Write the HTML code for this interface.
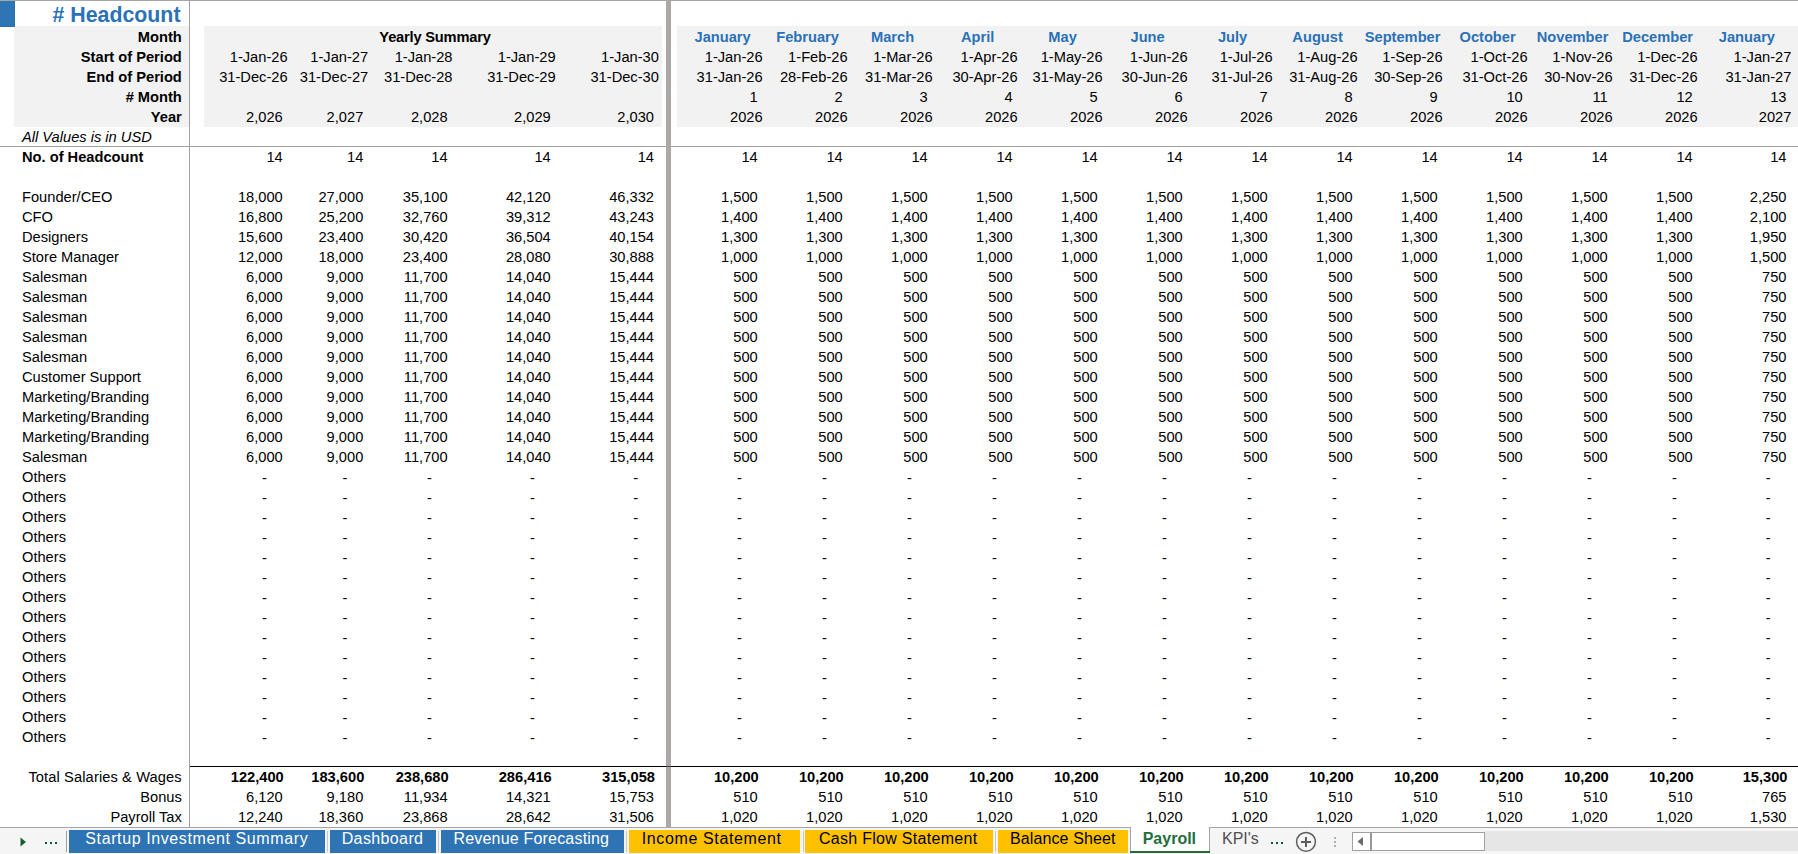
<!DOCTYPE html><html><head><meta charset="utf-8"><style>
*{margin:0;padding:0;box-sizing:border-box}
html,body{width:1798px;height:854px;overflow:hidden;background:#fff}
body{position:relative;font-family:"Liberation Sans", sans-serif;font-size:14.67px;color:#000}
.a{position:absolute}
.t{position:absolute;white-space:pre;line-height:20px;height:20px}
.r{text-align:right}
.b{font-weight:bold}
.bl{color:#2a71b8;font-weight:bold}
.c{text-align:center}
.i{font-style:italic}
</style></head><body>
<div class="a" style="left:14px;top:26px;width:175px;height:101px;background:#f2f2f2;"></div>
<div class="a" style="left:204px;top:26px;width:458px;height:101px;background:#f2f2f2;"></div>
<div class="a" style="left:677px;top:26px;width:1121px;height:101px;background:#f2f2f2;"></div>
<div class="a" style="left:0px;top:1px;width:15px;height:26px;background:#2e75b6;"></div>
<div class="a" style="left:14px;top:1px;width:1px;height:25px;background:#2a6db0;"></div>
<div class="a" style="left:0px;top:26px;width:14px;height:1px;background:#2a6db0;"></div>
<div class="t r bl" style="left:-119.5px;top:2px;width:300px;height:26px;line-height:26px;font-size:21.33px"># Headcount</div>
<div class="t r b" style="left:-118.20px;top:27px;width:300px">Month</div>
<div class="t r b" style="left:-118.20px;top:47px;width:300px">Start of Period</div>
<div class="t r b" style="left:-118.20px;top:67px;width:300px">End of Period</div>
<div class="t r b" style="left:-118.20px;top:87px;width:300px"># Month</div>
<div class="t r b" style="left:-118.20px;top:107px;width:300px">Year</div>
<div class="t i" style="left:22.00px;top:127px">All Values is in USD</div>
<div class="t c b" style="left:285.00px;top:27px;width:300px"><span style="letter-spacing:-0.2px">Yearly Summary</span></div>
<div class="t r " style="left:-12.40px;top:47px;width:300px">1-Jan-26</div>
<div class="t r " style="left:-12.40px;top:67px;width:300px">31-Dec-26</div>
<div class="t r " style="left:-17.29px;top:107px;width:300px">2,026</div>
<div class="t r " style="left:68.20px;top:47px;width:300px">1-Jan-27</div>
<div class="t r " style="left:68.20px;top:67px;width:300px">31-Dec-27</div>
<div class="t r " style="left:63.31px;top:107px;width:300px">2,027</div>
<div class="t r " style="left:152.50px;top:47px;width:300px">1-Jan-28</div>
<div class="t r " style="left:152.50px;top:67px;width:300px">31-Dec-28</div>
<div class="t r " style="left:147.61px;top:107px;width:300px">2,028</div>
<div class="t r " style="left:255.60px;top:47px;width:300px">1-Jan-29</div>
<div class="t r " style="left:255.60px;top:67px;width:300px">31-Dec-29</div>
<div class="t r " style="left:250.71px;top:107px;width:300px">2,029</div>
<div class="t r " style="left:358.90px;top:47px;width:300px">1-Jan-30</div>
<div class="t r " style="left:358.90px;top:67px;width:300px">31-Dec-30</div>
<div class="t r " style="left:354.01px;top:107px;width:300px">2,030</div>
<div class="t c bl" style="left:572.60px;top:27px;width:300px">January</div>
<div class="t r " style="left:462.60px;top:47px;width:300px">1-Jan-26</div>
<div class="t r " style="left:462.60px;top:67px;width:300px">31-Jan-26</div>
<div class="t r " style="left:457.71px;top:87px;width:300px">1</div>
<div class="t r " style="left:462.60px;top:107px;width:300px">2026</div>
<div class="t c bl" style="left:657.60px;top:27px;width:300px">February</div>
<div class="t r " style="left:547.60px;top:47px;width:300px">1-Feb-26</div>
<div class="t r " style="left:547.60px;top:67px;width:300px">28-Feb-26</div>
<div class="t r " style="left:542.71px;top:87px;width:300px">2</div>
<div class="t r " style="left:547.60px;top:107px;width:300px">2026</div>
<div class="t c bl" style="left:742.60px;top:27px;width:300px">March</div>
<div class="t r " style="left:632.60px;top:47px;width:300px">1-Mar-26</div>
<div class="t r " style="left:632.60px;top:67px;width:300px">31-Mar-26</div>
<div class="t r " style="left:627.71px;top:87px;width:300px">3</div>
<div class="t r " style="left:632.60px;top:107px;width:300px">2026</div>
<div class="t c bl" style="left:827.60px;top:27px;width:300px">April</div>
<div class="t r " style="left:717.60px;top:47px;width:300px">1-Apr-26</div>
<div class="t r " style="left:717.60px;top:67px;width:300px">30-Apr-26</div>
<div class="t r " style="left:712.71px;top:87px;width:300px">4</div>
<div class="t r " style="left:717.60px;top:107px;width:300px">2026</div>
<div class="t c bl" style="left:912.60px;top:27px;width:300px">May</div>
<div class="t r " style="left:802.60px;top:47px;width:300px">1-May-26</div>
<div class="t r " style="left:802.60px;top:67px;width:300px">31-May-26</div>
<div class="t r " style="left:797.71px;top:87px;width:300px">5</div>
<div class="t r " style="left:802.60px;top:107px;width:300px">2026</div>
<div class="t c bl" style="left:997.60px;top:27px;width:300px">June</div>
<div class="t r " style="left:887.60px;top:47px;width:300px">1-Jun-26</div>
<div class="t r " style="left:887.60px;top:67px;width:300px">30-Jun-26</div>
<div class="t r " style="left:882.71px;top:87px;width:300px">6</div>
<div class="t r " style="left:887.60px;top:107px;width:300px">2026</div>
<div class="t c bl" style="left:1082.60px;top:27px;width:300px">July</div>
<div class="t r " style="left:972.60px;top:47px;width:300px">1-Jul-26</div>
<div class="t r " style="left:972.60px;top:67px;width:300px">31-Jul-26</div>
<div class="t r " style="left:967.71px;top:87px;width:300px">7</div>
<div class="t r " style="left:972.60px;top:107px;width:300px">2026</div>
<div class="t c bl" style="left:1167.60px;top:27px;width:300px">August</div>
<div class="t r " style="left:1057.60px;top:47px;width:300px">1-Aug-26</div>
<div class="t r " style="left:1057.60px;top:67px;width:300px">31-Aug-26</div>
<div class="t r " style="left:1052.71px;top:87px;width:300px">8</div>
<div class="t r " style="left:1057.60px;top:107px;width:300px">2026</div>
<div class="t c bl" style="left:1252.60px;top:27px;width:300px">September</div>
<div class="t r " style="left:1142.60px;top:47px;width:300px">1-Sep-26</div>
<div class="t r " style="left:1142.60px;top:67px;width:300px">30-Sep-26</div>
<div class="t r " style="left:1137.71px;top:87px;width:300px">9</div>
<div class="t r " style="left:1142.60px;top:107px;width:300px">2026</div>
<div class="t c bl" style="left:1337.60px;top:27px;width:300px">October</div>
<div class="t r " style="left:1227.60px;top:47px;width:300px">1-Oct-26</div>
<div class="t r " style="left:1227.60px;top:67px;width:300px">31-Oct-26</div>
<div class="t r " style="left:1222.71px;top:87px;width:300px">10</div>
<div class="t r " style="left:1227.60px;top:107px;width:300px">2026</div>
<div class="t c bl" style="left:1422.60px;top:27px;width:300px">November</div>
<div class="t r " style="left:1312.60px;top:47px;width:300px">1-Nov-26</div>
<div class="t r " style="left:1312.60px;top:67px;width:300px">30-Nov-26</div>
<div class="t r " style="left:1307.71px;top:87px;width:300px">11</div>
<div class="t r " style="left:1312.60px;top:107px;width:300px">2026</div>
<div class="t c bl" style="left:1507.60px;top:27px;width:300px">December</div>
<div class="t r " style="left:1397.60px;top:47px;width:300px">1-Dec-26</div>
<div class="t r " style="left:1397.60px;top:67px;width:300px">31-Dec-26</div>
<div class="t r " style="left:1392.71px;top:87px;width:300px">12</div>
<div class="t r " style="left:1397.60px;top:107px;width:300px">2026</div>
<div class="t c bl" style="left:1596.90px;top:27px;width:300px">January</div>
<div class="t r " style="left:1491.40px;top:47px;width:300px">1-Jan-27</div>
<div class="t r " style="left:1491.40px;top:67px;width:300px">31-Jan-27</div>
<div class="t r " style="left:1486.51px;top:87px;width:300px">13</div>
<div class="t r " style="left:1491.40px;top:107px;width:300px">2027</div>
<div class="t b" style="left:22.00px;top:147px">No. of Headcount</div>
<div class="t r " style="left:-17.29px;top:147px;width:300px">14</div>
<div class="t r " style="left:63.31px;top:147px;width:300px">14</div>
<div class="t r " style="left:147.61px;top:147px;width:300px">14</div>
<div class="t r " style="left:250.71px;top:147px;width:300px">14</div>
<div class="t r " style="left:354.01px;top:147px;width:300px">14</div>
<div class="t r " style="left:457.71px;top:147px;width:300px">14</div>
<div class="t r " style="left:542.71px;top:147px;width:300px">14</div>
<div class="t r " style="left:627.71px;top:147px;width:300px">14</div>
<div class="t r " style="left:712.71px;top:147px;width:300px">14</div>
<div class="t r " style="left:797.71px;top:147px;width:300px">14</div>
<div class="t r " style="left:882.71px;top:147px;width:300px">14</div>
<div class="t r " style="left:967.71px;top:147px;width:300px">14</div>
<div class="t r " style="left:1052.71px;top:147px;width:300px">14</div>
<div class="t r " style="left:1137.71px;top:147px;width:300px">14</div>
<div class="t r " style="left:1222.71px;top:147px;width:300px">14</div>
<div class="t r " style="left:1307.71px;top:147px;width:300px">14</div>
<div class="t r " style="left:1392.71px;top:147px;width:300px">14</div>
<div class="t r " style="left:1486.51px;top:147px;width:300px">14</div>
<div class="t " style="left:22.00px;top:187px">Founder/CEO</div>
<div class="t r " style="left:-17.29px;top:187px;width:300px">18,000</div>
<div class="t r " style="left:63.31px;top:187px;width:300px">27,000</div>
<div class="t r " style="left:147.61px;top:187px;width:300px">35,100</div>
<div class="t r " style="left:250.71px;top:187px;width:300px">42,120</div>
<div class="t r " style="left:354.01px;top:187px;width:300px">46,332</div>
<div class="t r " style="left:457.71px;top:187px;width:300px">1,500</div>
<div class="t r " style="left:542.71px;top:187px;width:300px">1,500</div>
<div class="t r " style="left:627.71px;top:187px;width:300px">1,500</div>
<div class="t r " style="left:712.71px;top:187px;width:300px">1,500</div>
<div class="t r " style="left:797.71px;top:187px;width:300px">1,500</div>
<div class="t r " style="left:882.71px;top:187px;width:300px">1,500</div>
<div class="t r " style="left:967.71px;top:187px;width:300px">1,500</div>
<div class="t r " style="left:1052.71px;top:187px;width:300px">1,500</div>
<div class="t r " style="left:1137.71px;top:187px;width:300px">1,500</div>
<div class="t r " style="left:1222.71px;top:187px;width:300px">1,500</div>
<div class="t r " style="left:1307.71px;top:187px;width:300px">1,500</div>
<div class="t r " style="left:1392.71px;top:187px;width:300px">1,500</div>
<div class="t r " style="left:1486.51px;top:187px;width:300px">2,250</div>
<div class="t " style="left:22.00px;top:207px">CFO</div>
<div class="t r " style="left:-17.29px;top:207px;width:300px">16,800</div>
<div class="t r " style="left:63.31px;top:207px;width:300px">25,200</div>
<div class="t r " style="left:147.61px;top:207px;width:300px">32,760</div>
<div class="t r " style="left:250.71px;top:207px;width:300px">39,312</div>
<div class="t r " style="left:354.01px;top:207px;width:300px">43,243</div>
<div class="t r " style="left:457.71px;top:207px;width:300px">1,400</div>
<div class="t r " style="left:542.71px;top:207px;width:300px">1,400</div>
<div class="t r " style="left:627.71px;top:207px;width:300px">1,400</div>
<div class="t r " style="left:712.71px;top:207px;width:300px">1,400</div>
<div class="t r " style="left:797.71px;top:207px;width:300px">1,400</div>
<div class="t r " style="left:882.71px;top:207px;width:300px">1,400</div>
<div class="t r " style="left:967.71px;top:207px;width:300px">1,400</div>
<div class="t r " style="left:1052.71px;top:207px;width:300px">1,400</div>
<div class="t r " style="left:1137.71px;top:207px;width:300px">1,400</div>
<div class="t r " style="left:1222.71px;top:207px;width:300px">1,400</div>
<div class="t r " style="left:1307.71px;top:207px;width:300px">1,400</div>
<div class="t r " style="left:1392.71px;top:207px;width:300px">1,400</div>
<div class="t r " style="left:1486.51px;top:207px;width:300px">2,100</div>
<div class="t " style="left:22.00px;top:227px">Designers</div>
<div class="t r " style="left:-17.29px;top:227px;width:300px">15,600</div>
<div class="t r " style="left:63.31px;top:227px;width:300px">23,400</div>
<div class="t r " style="left:147.61px;top:227px;width:300px">30,420</div>
<div class="t r " style="left:250.71px;top:227px;width:300px">36,504</div>
<div class="t r " style="left:354.01px;top:227px;width:300px">40,154</div>
<div class="t r " style="left:457.71px;top:227px;width:300px">1,300</div>
<div class="t r " style="left:542.71px;top:227px;width:300px">1,300</div>
<div class="t r " style="left:627.71px;top:227px;width:300px">1,300</div>
<div class="t r " style="left:712.71px;top:227px;width:300px">1,300</div>
<div class="t r " style="left:797.71px;top:227px;width:300px">1,300</div>
<div class="t r " style="left:882.71px;top:227px;width:300px">1,300</div>
<div class="t r " style="left:967.71px;top:227px;width:300px">1,300</div>
<div class="t r " style="left:1052.71px;top:227px;width:300px">1,300</div>
<div class="t r " style="left:1137.71px;top:227px;width:300px">1,300</div>
<div class="t r " style="left:1222.71px;top:227px;width:300px">1,300</div>
<div class="t r " style="left:1307.71px;top:227px;width:300px">1,300</div>
<div class="t r " style="left:1392.71px;top:227px;width:300px">1,300</div>
<div class="t r " style="left:1486.51px;top:227px;width:300px">1,950</div>
<div class="t " style="left:22.00px;top:247px">Store Manager</div>
<div class="t r " style="left:-17.29px;top:247px;width:300px">12,000</div>
<div class="t r " style="left:63.31px;top:247px;width:300px">18,000</div>
<div class="t r " style="left:147.61px;top:247px;width:300px">23,400</div>
<div class="t r " style="left:250.71px;top:247px;width:300px">28,080</div>
<div class="t r " style="left:354.01px;top:247px;width:300px">30,888</div>
<div class="t r " style="left:457.71px;top:247px;width:300px">1,000</div>
<div class="t r " style="left:542.71px;top:247px;width:300px">1,000</div>
<div class="t r " style="left:627.71px;top:247px;width:300px">1,000</div>
<div class="t r " style="left:712.71px;top:247px;width:300px">1,000</div>
<div class="t r " style="left:797.71px;top:247px;width:300px">1,000</div>
<div class="t r " style="left:882.71px;top:247px;width:300px">1,000</div>
<div class="t r " style="left:967.71px;top:247px;width:300px">1,000</div>
<div class="t r " style="left:1052.71px;top:247px;width:300px">1,000</div>
<div class="t r " style="left:1137.71px;top:247px;width:300px">1,000</div>
<div class="t r " style="left:1222.71px;top:247px;width:300px">1,000</div>
<div class="t r " style="left:1307.71px;top:247px;width:300px">1,000</div>
<div class="t r " style="left:1392.71px;top:247px;width:300px">1,000</div>
<div class="t r " style="left:1486.51px;top:247px;width:300px">1,500</div>
<div class="t " style="left:22.00px;top:267px">Salesman</div>
<div class="t r " style="left:-17.29px;top:267px;width:300px">6,000</div>
<div class="t r " style="left:63.31px;top:267px;width:300px">9,000</div>
<div class="t r " style="left:147.61px;top:267px;width:300px">11,700</div>
<div class="t r " style="left:250.71px;top:267px;width:300px">14,040</div>
<div class="t r " style="left:354.01px;top:267px;width:300px">15,444</div>
<div class="t r " style="left:457.71px;top:267px;width:300px">500</div>
<div class="t r " style="left:542.71px;top:267px;width:300px">500</div>
<div class="t r " style="left:627.71px;top:267px;width:300px">500</div>
<div class="t r " style="left:712.71px;top:267px;width:300px">500</div>
<div class="t r " style="left:797.71px;top:267px;width:300px">500</div>
<div class="t r " style="left:882.71px;top:267px;width:300px">500</div>
<div class="t r " style="left:967.71px;top:267px;width:300px">500</div>
<div class="t r " style="left:1052.71px;top:267px;width:300px">500</div>
<div class="t r " style="left:1137.71px;top:267px;width:300px">500</div>
<div class="t r " style="left:1222.71px;top:267px;width:300px">500</div>
<div class="t r " style="left:1307.71px;top:267px;width:300px">500</div>
<div class="t r " style="left:1392.71px;top:267px;width:300px">500</div>
<div class="t r " style="left:1486.51px;top:267px;width:300px">750</div>
<div class="t " style="left:22.00px;top:287px">Salesman</div>
<div class="t r " style="left:-17.29px;top:287px;width:300px">6,000</div>
<div class="t r " style="left:63.31px;top:287px;width:300px">9,000</div>
<div class="t r " style="left:147.61px;top:287px;width:300px">11,700</div>
<div class="t r " style="left:250.71px;top:287px;width:300px">14,040</div>
<div class="t r " style="left:354.01px;top:287px;width:300px">15,444</div>
<div class="t r " style="left:457.71px;top:287px;width:300px">500</div>
<div class="t r " style="left:542.71px;top:287px;width:300px">500</div>
<div class="t r " style="left:627.71px;top:287px;width:300px">500</div>
<div class="t r " style="left:712.71px;top:287px;width:300px">500</div>
<div class="t r " style="left:797.71px;top:287px;width:300px">500</div>
<div class="t r " style="left:882.71px;top:287px;width:300px">500</div>
<div class="t r " style="left:967.71px;top:287px;width:300px">500</div>
<div class="t r " style="left:1052.71px;top:287px;width:300px">500</div>
<div class="t r " style="left:1137.71px;top:287px;width:300px">500</div>
<div class="t r " style="left:1222.71px;top:287px;width:300px">500</div>
<div class="t r " style="left:1307.71px;top:287px;width:300px">500</div>
<div class="t r " style="left:1392.71px;top:287px;width:300px">500</div>
<div class="t r " style="left:1486.51px;top:287px;width:300px">750</div>
<div class="t " style="left:22.00px;top:307px">Salesman</div>
<div class="t r " style="left:-17.29px;top:307px;width:300px">6,000</div>
<div class="t r " style="left:63.31px;top:307px;width:300px">9,000</div>
<div class="t r " style="left:147.61px;top:307px;width:300px">11,700</div>
<div class="t r " style="left:250.71px;top:307px;width:300px">14,040</div>
<div class="t r " style="left:354.01px;top:307px;width:300px">15,444</div>
<div class="t r " style="left:457.71px;top:307px;width:300px">500</div>
<div class="t r " style="left:542.71px;top:307px;width:300px">500</div>
<div class="t r " style="left:627.71px;top:307px;width:300px">500</div>
<div class="t r " style="left:712.71px;top:307px;width:300px">500</div>
<div class="t r " style="left:797.71px;top:307px;width:300px">500</div>
<div class="t r " style="left:882.71px;top:307px;width:300px">500</div>
<div class="t r " style="left:967.71px;top:307px;width:300px">500</div>
<div class="t r " style="left:1052.71px;top:307px;width:300px">500</div>
<div class="t r " style="left:1137.71px;top:307px;width:300px">500</div>
<div class="t r " style="left:1222.71px;top:307px;width:300px">500</div>
<div class="t r " style="left:1307.71px;top:307px;width:300px">500</div>
<div class="t r " style="left:1392.71px;top:307px;width:300px">500</div>
<div class="t r " style="left:1486.51px;top:307px;width:300px">750</div>
<div class="t " style="left:22.00px;top:327px">Salesman</div>
<div class="t r " style="left:-17.29px;top:327px;width:300px">6,000</div>
<div class="t r " style="left:63.31px;top:327px;width:300px">9,000</div>
<div class="t r " style="left:147.61px;top:327px;width:300px">11,700</div>
<div class="t r " style="left:250.71px;top:327px;width:300px">14,040</div>
<div class="t r " style="left:354.01px;top:327px;width:300px">15,444</div>
<div class="t r " style="left:457.71px;top:327px;width:300px">500</div>
<div class="t r " style="left:542.71px;top:327px;width:300px">500</div>
<div class="t r " style="left:627.71px;top:327px;width:300px">500</div>
<div class="t r " style="left:712.71px;top:327px;width:300px">500</div>
<div class="t r " style="left:797.71px;top:327px;width:300px">500</div>
<div class="t r " style="left:882.71px;top:327px;width:300px">500</div>
<div class="t r " style="left:967.71px;top:327px;width:300px">500</div>
<div class="t r " style="left:1052.71px;top:327px;width:300px">500</div>
<div class="t r " style="left:1137.71px;top:327px;width:300px">500</div>
<div class="t r " style="left:1222.71px;top:327px;width:300px">500</div>
<div class="t r " style="left:1307.71px;top:327px;width:300px">500</div>
<div class="t r " style="left:1392.71px;top:327px;width:300px">500</div>
<div class="t r " style="left:1486.51px;top:327px;width:300px">750</div>
<div class="t " style="left:22.00px;top:347px">Salesman</div>
<div class="t r " style="left:-17.29px;top:347px;width:300px">6,000</div>
<div class="t r " style="left:63.31px;top:347px;width:300px">9,000</div>
<div class="t r " style="left:147.61px;top:347px;width:300px">11,700</div>
<div class="t r " style="left:250.71px;top:347px;width:300px">14,040</div>
<div class="t r " style="left:354.01px;top:347px;width:300px">15,444</div>
<div class="t r " style="left:457.71px;top:347px;width:300px">500</div>
<div class="t r " style="left:542.71px;top:347px;width:300px">500</div>
<div class="t r " style="left:627.71px;top:347px;width:300px">500</div>
<div class="t r " style="left:712.71px;top:347px;width:300px">500</div>
<div class="t r " style="left:797.71px;top:347px;width:300px">500</div>
<div class="t r " style="left:882.71px;top:347px;width:300px">500</div>
<div class="t r " style="left:967.71px;top:347px;width:300px">500</div>
<div class="t r " style="left:1052.71px;top:347px;width:300px">500</div>
<div class="t r " style="left:1137.71px;top:347px;width:300px">500</div>
<div class="t r " style="left:1222.71px;top:347px;width:300px">500</div>
<div class="t r " style="left:1307.71px;top:347px;width:300px">500</div>
<div class="t r " style="left:1392.71px;top:347px;width:300px">500</div>
<div class="t r " style="left:1486.51px;top:347px;width:300px">750</div>
<div class="t " style="left:22.00px;top:367px">Customer Support</div>
<div class="t r " style="left:-17.29px;top:367px;width:300px">6,000</div>
<div class="t r " style="left:63.31px;top:367px;width:300px">9,000</div>
<div class="t r " style="left:147.61px;top:367px;width:300px">11,700</div>
<div class="t r " style="left:250.71px;top:367px;width:300px">14,040</div>
<div class="t r " style="left:354.01px;top:367px;width:300px">15,444</div>
<div class="t r " style="left:457.71px;top:367px;width:300px">500</div>
<div class="t r " style="left:542.71px;top:367px;width:300px">500</div>
<div class="t r " style="left:627.71px;top:367px;width:300px">500</div>
<div class="t r " style="left:712.71px;top:367px;width:300px">500</div>
<div class="t r " style="left:797.71px;top:367px;width:300px">500</div>
<div class="t r " style="left:882.71px;top:367px;width:300px">500</div>
<div class="t r " style="left:967.71px;top:367px;width:300px">500</div>
<div class="t r " style="left:1052.71px;top:367px;width:300px">500</div>
<div class="t r " style="left:1137.71px;top:367px;width:300px">500</div>
<div class="t r " style="left:1222.71px;top:367px;width:300px">500</div>
<div class="t r " style="left:1307.71px;top:367px;width:300px">500</div>
<div class="t r " style="left:1392.71px;top:367px;width:300px">500</div>
<div class="t r " style="left:1486.51px;top:367px;width:300px">750</div>
<div class="t " style="left:22.00px;top:387px">Marketing/Branding</div>
<div class="t r " style="left:-17.29px;top:387px;width:300px">6,000</div>
<div class="t r " style="left:63.31px;top:387px;width:300px">9,000</div>
<div class="t r " style="left:147.61px;top:387px;width:300px">11,700</div>
<div class="t r " style="left:250.71px;top:387px;width:300px">14,040</div>
<div class="t r " style="left:354.01px;top:387px;width:300px">15,444</div>
<div class="t r " style="left:457.71px;top:387px;width:300px">500</div>
<div class="t r " style="left:542.71px;top:387px;width:300px">500</div>
<div class="t r " style="left:627.71px;top:387px;width:300px">500</div>
<div class="t r " style="left:712.71px;top:387px;width:300px">500</div>
<div class="t r " style="left:797.71px;top:387px;width:300px">500</div>
<div class="t r " style="left:882.71px;top:387px;width:300px">500</div>
<div class="t r " style="left:967.71px;top:387px;width:300px">500</div>
<div class="t r " style="left:1052.71px;top:387px;width:300px">500</div>
<div class="t r " style="left:1137.71px;top:387px;width:300px">500</div>
<div class="t r " style="left:1222.71px;top:387px;width:300px">500</div>
<div class="t r " style="left:1307.71px;top:387px;width:300px">500</div>
<div class="t r " style="left:1392.71px;top:387px;width:300px">500</div>
<div class="t r " style="left:1486.51px;top:387px;width:300px">750</div>
<div class="t " style="left:22.00px;top:407px">Marketing/Branding</div>
<div class="t r " style="left:-17.29px;top:407px;width:300px">6,000</div>
<div class="t r " style="left:63.31px;top:407px;width:300px">9,000</div>
<div class="t r " style="left:147.61px;top:407px;width:300px">11,700</div>
<div class="t r " style="left:250.71px;top:407px;width:300px">14,040</div>
<div class="t r " style="left:354.01px;top:407px;width:300px">15,444</div>
<div class="t r " style="left:457.71px;top:407px;width:300px">500</div>
<div class="t r " style="left:542.71px;top:407px;width:300px">500</div>
<div class="t r " style="left:627.71px;top:407px;width:300px">500</div>
<div class="t r " style="left:712.71px;top:407px;width:300px">500</div>
<div class="t r " style="left:797.71px;top:407px;width:300px">500</div>
<div class="t r " style="left:882.71px;top:407px;width:300px">500</div>
<div class="t r " style="left:967.71px;top:407px;width:300px">500</div>
<div class="t r " style="left:1052.71px;top:407px;width:300px">500</div>
<div class="t r " style="left:1137.71px;top:407px;width:300px">500</div>
<div class="t r " style="left:1222.71px;top:407px;width:300px">500</div>
<div class="t r " style="left:1307.71px;top:407px;width:300px">500</div>
<div class="t r " style="left:1392.71px;top:407px;width:300px">500</div>
<div class="t r " style="left:1486.51px;top:407px;width:300px">750</div>
<div class="t " style="left:22.00px;top:427px">Marketing/Branding</div>
<div class="t r " style="left:-17.29px;top:427px;width:300px">6,000</div>
<div class="t r " style="left:63.31px;top:427px;width:300px">9,000</div>
<div class="t r " style="left:147.61px;top:427px;width:300px">11,700</div>
<div class="t r " style="left:250.71px;top:427px;width:300px">14,040</div>
<div class="t r " style="left:354.01px;top:427px;width:300px">15,444</div>
<div class="t r " style="left:457.71px;top:427px;width:300px">500</div>
<div class="t r " style="left:542.71px;top:427px;width:300px">500</div>
<div class="t r " style="left:627.71px;top:427px;width:300px">500</div>
<div class="t r " style="left:712.71px;top:427px;width:300px">500</div>
<div class="t r " style="left:797.71px;top:427px;width:300px">500</div>
<div class="t r " style="left:882.71px;top:427px;width:300px">500</div>
<div class="t r " style="left:967.71px;top:427px;width:300px">500</div>
<div class="t r " style="left:1052.71px;top:427px;width:300px">500</div>
<div class="t r " style="left:1137.71px;top:427px;width:300px">500</div>
<div class="t r " style="left:1222.71px;top:427px;width:300px">500</div>
<div class="t r " style="left:1307.71px;top:427px;width:300px">500</div>
<div class="t r " style="left:1392.71px;top:427px;width:300px">500</div>
<div class="t r " style="left:1486.51px;top:427px;width:300px">750</div>
<div class="t " style="left:22.00px;top:447px">Salesman</div>
<div class="t r " style="left:-17.29px;top:447px;width:300px">6,000</div>
<div class="t r " style="left:63.31px;top:447px;width:300px">9,000</div>
<div class="t r " style="left:147.61px;top:447px;width:300px">11,700</div>
<div class="t r " style="left:250.71px;top:447px;width:300px">14,040</div>
<div class="t r " style="left:354.01px;top:447px;width:300px">15,444</div>
<div class="t r " style="left:457.71px;top:447px;width:300px">500</div>
<div class="t r " style="left:542.71px;top:447px;width:300px">500</div>
<div class="t r " style="left:627.71px;top:447px;width:300px">500</div>
<div class="t r " style="left:712.71px;top:447px;width:300px">500</div>
<div class="t r " style="left:797.71px;top:447px;width:300px">500</div>
<div class="t r " style="left:882.71px;top:447px;width:300px">500</div>
<div class="t r " style="left:967.71px;top:447px;width:300px">500</div>
<div class="t r " style="left:1052.71px;top:447px;width:300px">500</div>
<div class="t r " style="left:1137.71px;top:447px;width:300px">500</div>
<div class="t r " style="left:1222.71px;top:447px;width:300px">500</div>
<div class="t r " style="left:1307.71px;top:447px;width:300px">500</div>
<div class="t r " style="left:1392.71px;top:447px;width:300px">500</div>
<div class="t r " style="left:1486.51px;top:447px;width:300px">750</div>
<div class="t " style="left:22.00px;top:467px">Others</div>
<div class="t r " style="left:-33.09px;top:468px;width:300px">-</div>
<div class="t r " style="left:47.51px;top:468px;width:300px">-</div>
<div class="t r " style="left:131.81px;top:468px;width:300px">-</div>
<div class="t r " style="left:234.91px;top:468px;width:300px">-</div>
<div class="t r " style="left:338.21px;top:468px;width:300px">-</div>
<div class="t r " style="left:441.91px;top:468px;width:300px">-</div>
<div class="t r " style="left:526.91px;top:468px;width:300px">-</div>
<div class="t r " style="left:611.91px;top:468px;width:300px">-</div>
<div class="t r " style="left:696.91px;top:468px;width:300px">-</div>
<div class="t r " style="left:781.91px;top:468px;width:300px">-</div>
<div class="t r " style="left:866.91px;top:468px;width:300px">-</div>
<div class="t r " style="left:951.91px;top:468px;width:300px">-</div>
<div class="t r " style="left:1036.91px;top:468px;width:300px">-</div>
<div class="t r " style="left:1121.91px;top:468px;width:300px">-</div>
<div class="t r " style="left:1206.91px;top:468px;width:300px">-</div>
<div class="t r " style="left:1291.91px;top:468px;width:300px">-</div>
<div class="t r " style="left:1376.91px;top:468px;width:300px">-</div>
<div class="t r " style="left:1470.71px;top:468px;width:300px">-</div>
<div class="t " style="left:22.00px;top:487px">Others</div>
<div class="t r " style="left:-33.09px;top:488px;width:300px">-</div>
<div class="t r " style="left:47.51px;top:488px;width:300px">-</div>
<div class="t r " style="left:131.81px;top:488px;width:300px">-</div>
<div class="t r " style="left:234.91px;top:488px;width:300px">-</div>
<div class="t r " style="left:338.21px;top:488px;width:300px">-</div>
<div class="t r " style="left:441.91px;top:488px;width:300px">-</div>
<div class="t r " style="left:526.91px;top:488px;width:300px">-</div>
<div class="t r " style="left:611.91px;top:488px;width:300px">-</div>
<div class="t r " style="left:696.91px;top:488px;width:300px">-</div>
<div class="t r " style="left:781.91px;top:488px;width:300px">-</div>
<div class="t r " style="left:866.91px;top:488px;width:300px">-</div>
<div class="t r " style="left:951.91px;top:488px;width:300px">-</div>
<div class="t r " style="left:1036.91px;top:488px;width:300px">-</div>
<div class="t r " style="left:1121.91px;top:488px;width:300px">-</div>
<div class="t r " style="left:1206.91px;top:488px;width:300px">-</div>
<div class="t r " style="left:1291.91px;top:488px;width:300px">-</div>
<div class="t r " style="left:1376.91px;top:488px;width:300px">-</div>
<div class="t r " style="left:1470.71px;top:488px;width:300px">-</div>
<div class="t " style="left:22.00px;top:507px">Others</div>
<div class="t r " style="left:-33.09px;top:508px;width:300px">-</div>
<div class="t r " style="left:47.51px;top:508px;width:300px">-</div>
<div class="t r " style="left:131.81px;top:508px;width:300px">-</div>
<div class="t r " style="left:234.91px;top:508px;width:300px">-</div>
<div class="t r " style="left:338.21px;top:508px;width:300px">-</div>
<div class="t r " style="left:441.91px;top:508px;width:300px">-</div>
<div class="t r " style="left:526.91px;top:508px;width:300px">-</div>
<div class="t r " style="left:611.91px;top:508px;width:300px">-</div>
<div class="t r " style="left:696.91px;top:508px;width:300px">-</div>
<div class="t r " style="left:781.91px;top:508px;width:300px">-</div>
<div class="t r " style="left:866.91px;top:508px;width:300px">-</div>
<div class="t r " style="left:951.91px;top:508px;width:300px">-</div>
<div class="t r " style="left:1036.91px;top:508px;width:300px">-</div>
<div class="t r " style="left:1121.91px;top:508px;width:300px">-</div>
<div class="t r " style="left:1206.91px;top:508px;width:300px">-</div>
<div class="t r " style="left:1291.91px;top:508px;width:300px">-</div>
<div class="t r " style="left:1376.91px;top:508px;width:300px">-</div>
<div class="t r " style="left:1470.71px;top:508px;width:300px">-</div>
<div class="t " style="left:22.00px;top:527px">Others</div>
<div class="t r " style="left:-33.09px;top:528px;width:300px">-</div>
<div class="t r " style="left:47.51px;top:528px;width:300px">-</div>
<div class="t r " style="left:131.81px;top:528px;width:300px">-</div>
<div class="t r " style="left:234.91px;top:528px;width:300px">-</div>
<div class="t r " style="left:338.21px;top:528px;width:300px">-</div>
<div class="t r " style="left:441.91px;top:528px;width:300px">-</div>
<div class="t r " style="left:526.91px;top:528px;width:300px">-</div>
<div class="t r " style="left:611.91px;top:528px;width:300px">-</div>
<div class="t r " style="left:696.91px;top:528px;width:300px">-</div>
<div class="t r " style="left:781.91px;top:528px;width:300px">-</div>
<div class="t r " style="left:866.91px;top:528px;width:300px">-</div>
<div class="t r " style="left:951.91px;top:528px;width:300px">-</div>
<div class="t r " style="left:1036.91px;top:528px;width:300px">-</div>
<div class="t r " style="left:1121.91px;top:528px;width:300px">-</div>
<div class="t r " style="left:1206.91px;top:528px;width:300px">-</div>
<div class="t r " style="left:1291.91px;top:528px;width:300px">-</div>
<div class="t r " style="left:1376.91px;top:528px;width:300px">-</div>
<div class="t r " style="left:1470.71px;top:528px;width:300px">-</div>
<div class="t " style="left:22.00px;top:547px">Others</div>
<div class="t r " style="left:-33.09px;top:548px;width:300px">-</div>
<div class="t r " style="left:47.51px;top:548px;width:300px">-</div>
<div class="t r " style="left:131.81px;top:548px;width:300px">-</div>
<div class="t r " style="left:234.91px;top:548px;width:300px">-</div>
<div class="t r " style="left:338.21px;top:548px;width:300px">-</div>
<div class="t r " style="left:441.91px;top:548px;width:300px">-</div>
<div class="t r " style="left:526.91px;top:548px;width:300px">-</div>
<div class="t r " style="left:611.91px;top:548px;width:300px">-</div>
<div class="t r " style="left:696.91px;top:548px;width:300px">-</div>
<div class="t r " style="left:781.91px;top:548px;width:300px">-</div>
<div class="t r " style="left:866.91px;top:548px;width:300px">-</div>
<div class="t r " style="left:951.91px;top:548px;width:300px">-</div>
<div class="t r " style="left:1036.91px;top:548px;width:300px">-</div>
<div class="t r " style="left:1121.91px;top:548px;width:300px">-</div>
<div class="t r " style="left:1206.91px;top:548px;width:300px">-</div>
<div class="t r " style="left:1291.91px;top:548px;width:300px">-</div>
<div class="t r " style="left:1376.91px;top:548px;width:300px">-</div>
<div class="t r " style="left:1470.71px;top:548px;width:300px">-</div>
<div class="t " style="left:22.00px;top:567px">Others</div>
<div class="t r " style="left:-33.09px;top:568px;width:300px">-</div>
<div class="t r " style="left:47.51px;top:568px;width:300px">-</div>
<div class="t r " style="left:131.81px;top:568px;width:300px">-</div>
<div class="t r " style="left:234.91px;top:568px;width:300px">-</div>
<div class="t r " style="left:338.21px;top:568px;width:300px">-</div>
<div class="t r " style="left:441.91px;top:568px;width:300px">-</div>
<div class="t r " style="left:526.91px;top:568px;width:300px">-</div>
<div class="t r " style="left:611.91px;top:568px;width:300px">-</div>
<div class="t r " style="left:696.91px;top:568px;width:300px">-</div>
<div class="t r " style="left:781.91px;top:568px;width:300px">-</div>
<div class="t r " style="left:866.91px;top:568px;width:300px">-</div>
<div class="t r " style="left:951.91px;top:568px;width:300px">-</div>
<div class="t r " style="left:1036.91px;top:568px;width:300px">-</div>
<div class="t r " style="left:1121.91px;top:568px;width:300px">-</div>
<div class="t r " style="left:1206.91px;top:568px;width:300px">-</div>
<div class="t r " style="left:1291.91px;top:568px;width:300px">-</div>
<div class="t r " style="left:1376.91px;top:568px;width:300px">-</div>
<div class="t r " style="left:1470.71px;top:568px;width:300px">-</div>
<div class="t " style="left:22.00px;top:587px">Others</div>
<div class="t r " style="left:-33.09px;top:588px;width:300px">-</div>
<div class="t r " style="left:47.51px;top:588px;width:300px">-</div>
<div class="t r " style="left:131.81px;top:588px;width:300px">-</div>
<div class="t r " style="left:234.91px;top:588px;width:300px">-</div>
<div class="t r " style="left:338.21px;top:588px;width:300px">-</div>
<div class="t r " style="left:441.91px;top:588px;width:300px">-</div>
<div class="t r " style="left:526.91px;top:588px;width:300px">-</div>
<div class="t r " style="left:611.91px;top:588px;width:300px">-</div>
<div class="t r " style="left:696.91px;top:588px;width:300px">-</div>
<div class="t r " style="left:781.91px;top:588px;width:300px">-</div>
<div class="t r " style="left:866.91px;top:588px;width:300px">-</div>
<div class="t r " style="left:951.91px;top:588px;width:300px">-</div>
<div class="t r " style="left:1036.91px;top:588px;width:300px">-</div>
<div class="t r " style="left:1121.91px;top:588px;width:300px">-</div>
<div class="t r " style="left:1206.91px;top:588px;width:300px">-</div>
<div class="t r " style="left:1291.91px;top:588px;width:300px">-</div>
<div class="t r " style="left:1376.91px;top:588px;width:300px">-</div>
<div class="t r " style="left:1470.71px;top:588px;width:300px">-</div>
<div class="t " style="left:22.00px;top:607px">Others</div>
<div class="t r " style="left:-33.09px;top:608px;width:300px">-</div>
<div class="t r " style="left:47.51px;top:608px;width:300px">-</div>
<div class="t r " style="left:131.81px;top:608px;width:300px">-</div>
<div class="t r " style="left:234.91px;top:608px;width:300px">-</div>
<div class="t r " style="left:338.21px;top:608px;width:300px">-</div>
<div class="t r " style="left:441.91px;top:608px;width:300px">-</div>
<div class="t r " style="left:526.91px;top:608px;width:300px">-</div>
<div class="t r " style="left:611.91px;top:608px;width:300px">-</div>
<div class="t r " style="left:696.91px;top:608px;width:300px">-</div>
<div class="t r " style="left:781.91px;top:608px;width:300px">-</div>
<div class="t r " style="left:866.91px;top:608px;width:300px">-</div>
<div class="t r " style="left:951.91px;top:608px;width:300px">-</div>
<div class="t r " style="left:1036.91px;top:608px;width:300px">-</div>
<div class="t r " style="left:1121.91px;top:608px;width:300px">-</div>
<div class="t r " style="left:1206.91px;top:608px;width:300px">-</div>
<div class="t r " style="left:1291.91px;top:608px;width:300px">-</div>
<div class="t r " style="left:1376.91px;top:608px;width:300px">-</div>
<div class="t r " style="left:1470.71px;top:608px;width:300px">-</div>
<div class="t " style="left:22.00px;top:627px">Others</div>
<div class="t r " style="left:-33.09px;top:628px;width:300px">-</div>
<div class="t r " style="left:47.51px;top:628px;width:300px">-</div>
<div class="t r " style="left:131.81px;top:628px;width:300px">-</div>
<div class="t r " style="left:234.91px;top:628px;width:300px">-</div>
<div class="t r " style="left:338.21px;top:628px;width:300px">-</div>
<div class="t r " style="left:441.91px;top:628px;width:300px">-</div>
<div class="t r " style="left:526.91px;top:628px;width:300px">-</div>
<div class="t r " style="left:611.91px;top:628px;width:300px">-</div>
<div class="t r " style="left:696.91px;top:628px;width:300px">-</div>
<div class="t r " style="left:781.91px;top:628px;width:300px">-</div>
<div class="t r " style="left:866.91px;top:628px;width:300px">-</div>
<div class="t r " style="left:951.91px;top:628px;width:300px">-</div>
<div class="t r " style="left:1036.91px;top:628px;width:300px">-</div>
<div class="t r " style="left:1121.91px;top:628px;width:300px">-</div>
<div class="t r " style="left:1206.91px;top:628px;width:300px">-</div>
<div class="t r " style="left:1291.91px;top:628px;width:300px">-</div>
<div class="t r " style="left:1376.91px;top:628px;width:300px">-</div>
<div class="t r " style="left:1470.71px;top:628px;width:300px">-</div>
<div class="t " style="left:22.00px;top:647px">Others</div>
<div class="t r " style="left:-33.09px;top:648px;width:300px">-</div>
<div class="t r " style="left:47.51px;top:648px;width:300px">-</div>
<div class="t r " style="left:131.81px;top:648px;width:300px">-</div>
<div class="t r " style="left:234.91px;top:648px;width:300px">-</div>
<div class="t r " style="left:338.21px;top:648px;width:300px">-</div>
<div class="t r " style="left:441.91px;top:648px;width:300px">-</div>
<div class="t r " style="left:526.91px;top:648px;width:300px">-</div>
<div class="t r " style="left:611.91px;top:648px;width:300px">-</div>
<div class="t r " style="left:696.91px;top:648px;width:300px">-</div>
<div class="t r " style="left:781.91px;top:648px;width:300px">-</div>
<div class="t r " style="left:866.91px;top:648px;width:300px">-</div>
<div class="t r " style="left:951.91px;top:648px;width:300px">-</div>
<div class="t r " style="left:1036.91px;top:648px;width:300px">-</div>
<div class="t r " style="left:1121.91px;top:648px;width:300px">-</div>
<div class="t r " style="left:1206.91px;top:648px;width:300px">-</div>
<div class="t r " style="left:1291.91px;top:648px;width:300px">-</div>
<div class="t r " style="left:1376.91px;top:648px;width:300px">-</div>
<div class="t r " style="left:1470.71px;top:648px;width:300px">-</div>
<div class="t " style="left:22.00px;top:667px">Others</div>
<div class="t r " style="left:-33.09px;top:668px;width:300px">-</div>
<div class="t r " style="left:47.51px;top:668px;width:300px">-</div>
<div class="t r " style="left:131.81px;top:668px;width:300px">-</div>
<div class="t r " style="left:234.91px;top:668px;width:300px">-</div>
<div class="t r " style="left:338.21px;top:668px;width:300px">-</div>
<div class="t r " style="left:441.91px;top:668px;width:300px">-</div>
<div class="t r " style="left:526.91px;top:668px;width:300px">-</div>
<div class="t r " style="left:611.91px;top:668px;width:300px">-</div>
<div class="t r " style="left:696.91px;top:668px;width:300px">-</div>
<div class="t r " style="left:781.91px;top:668px;width:300px">-</div>
<div class="t r " style="left:866.91px;top:668px;width:300px">-</div>
<div class="t r " style="left:951.91px;top:668px;width:300px">-</div>
<div class="t r " style="left:1036.91px;top:668px;width:300px">-</div>
<div class="t r " style="left:1121.91px;top:668px;width:300px">-</div>
<div class="t r " style="left:1206.91px;top:668px;width:300px">-</div>
<div class="t r " style="left:1291.91px;top:668px;width:300px">-</div>
<div class="t r " style="left:1376.91px;top:668px;width:300px">-</div>
<div class="t r " style="left:1470.71px;top:668px;width:300px">-</div>
<div class="t " style="left:22.00px;top:687px">Others</div>
<div class="t r " style="left:-33.09px;top:688px;width:300px">-</div>
<div class="t r " style="left:47.51px;top:688px;width:300px">-</div>
<div class="t r " style="left:131.81px;top:688px;width:300px">-</div>
<div class="t r " style="left:234.91px;top:688px;width:300px">-</div>
<div class="t r " style="left:338.21px;top:688px;width:300px">-</div>
<div class="t r " style="left:441.91px;top:688px;width:300px">-</div>
<div class="t r " style="left:526.91px;top:688px;width:300px">-</div>
<div class="t r " style="left:611.91px;top:688px;width:300px">-</div>
<div class="t r " style="left:696.91px;top:688px;width:300px">-</div>
<div class="t r " style="left:781.91px;top:688px;width:300px">-</div>
<div class="t r " style="left:866.91px;top:688px;width:300px">-</div>
<div class="t r " style="left:951.91px;top:688px;width:300px">-</div>
<div class="t r " style="left:1036.91px;top:688px;width:300px">-</div>
<div class="t r " style="left:1121.91px;top:688px;width:300px">-</div>
<div class="t r " style="left:1206.91px;top:688px;width:300px">-</div>
<div class="t r " style="left:1291.91px;top:688px;width:300px">-</div>
<div class="t r " style="left:1376.91px;top:688px;width:300px">-</div>
<div class="t r " style="left:1470.71px;top:688px;width:300px">-</div>
<div class="t " style="left:22.00px;top:707px">Others</div>
<div class="t r " style="left:-33.09px;top:708px;width:300px">-</div>
<div class="t r " style="left:47.51px;top:708px;width:300px">-</div>
<div class="t r " style="left:131.81px;top:708px;width:300px">-</div>
<div class="t r " style="left:234.91px;top:708px;width:300px">-</div>
<div class="t r " style="left:338.21px;top:708px;width:300px">-</div>
<div class="t r " style="left:441.91px;top:708px;width:300px">-</div>
<div class="t r " style="left:526.91px;top:708px;width:300px">-</div>
<div class="t r " style="left:611.91px;top:708px;width:300px">-</div>
<div class="t r " style="left:696.91px;top:708px;width:300px">-</div>
<div class="t r " style="left:781.91px;top:708px;width:300px">-</div>
<div class="t r " style="left:866.91px;top:708px;width:300px">-</div>
<div class="t r " style="left:951.91px;top:708px;width:300px">-</div>
<div class="t r " style="left:1036.91px;top:708px;width:300px">-</div>
<div class="t r " style="left:1121.91px;top:708px;width:300px">-</div>
<div class="t r " style="left:1206.91px;top:708px;width:300px">-</div>
<div class="t r " style="left:1291.91px;top:708px;width:300px">-</div>
<div class="t r " style="left:1376.91px;top:708px;width:300px">-</div>
<div class="t r " style="left:1470.71px;top:708px;width:300px">-</div>
<div class="t " style="left:22.00px;top:727px">Others</div>
<div class="t r " style="left:-33.09px;top:728px;width:300px">-</div>
<div class="t r " style="left:47.51px;top:728px;width:300px">-</div>
<div class="t r " style="left:131.81px;top:728px;width:300px">-</div>
<div class="t r " style="left:234.91px;top:728px;width:300px">-</div>
<div class="t r " style="left:338.21px;top:728px;width:300px">-</div>
<div class="t r " style="left:441.91px;top:728px;width:300px">-</div>
<div class="t r " style="left:526.91px;top:728px;width:300px">-</div>
<div class="t r " style="left:611.91px;top:728px;width:300px">-</div>
<div class="t r " style="left:696.91px;top:728px;width:300px">-</div>
<div class="t r " style="left:781.91px;top:728px;width:300px">-</div>
<div class="t r " style="left:866.91px;top:728px;width:300px">-</div>
<div class="t r " style="left:951.91px;top:728px;width:300px">-</div>
<div class="t r " style="left:1036.91px;top:728px;width:300px">-</div>
<div class="t r " style="left:1121.91px;top:728px;width:300px">-</div>
<div class="t r " style="left:1206.91px;top:728px;width:300px">-</div>
<div class="t r " style="left:1291.91px;top:728px;width:300px">-</div>
<div class="t r " style="left:1376.91px;top:728px;width:300px">-</div>
<div class="t r " style="left:1470.71px;top:728px;width:300px">-</div>
<div class="t r " style="left:-118.20px;top:767px;width:300px"><span style="letter-spacing:0.11px">Total Salaries &amp; Wages</span></div>
<div class="t r b" style="left:-16.29px;top:767px;width:300px">122,400</div>
<div class="t r b" style="left:64.31px;top:767px;width:300px">183,600</div>
<div class="t r b" style="left:148.61px;top:767px;width:300px">238,680</div>
<div class="t r b" style="left:251.71px;top:767px;width:300px">286,416</div>
<div class="t r b" style="left:355.01px;top:767px;width:300px">315,058</div>
<div class="t r b" style="left:458.71px;top:767px;width:300px">10,200</div>
<div class="t r b" style="left:543.71px;top:767px;width:300px">10,200</div>
<div class="t r b" style="left:628.71px;top:767px;width:300px">10,200</div>
<div class="t r b" style="left:713.71px;top:767px;width:300px">10,200</div>
<div class="t r b" style="left:798.71px;top:767px;width:300px">10,200</div>
<div class="t r b" style="left:883.71px;top:767px;width:300px">10,200</div>
<div class="t r b" style="left:968.71px;top:767px;width:300px">10,200</div>
<div class="t r b" style="left:1053.71px;top:767px;width:300px">10,200</div>
<div class="t r b" style="left:1138.71px;top:767px;width:300px">10,200</div>
<div class="t r b" style="left:1223.71px;top:767px;width:300px">10,200</div>
<div class="t r b" style="left:1308.71px;top:767px;width:300px">10,200</div>
<div class="t r b" style="left:1393.71px;top:767px;width:300px">10,200</div>
<div class="t r b" style="left:1487.51px;top:767px;width:300px">15,300</div>
<div class="t r " style="left:-118.20px;top:787px;width:300px">Bonus</div>
<div class="t r " style="left:-17.29px;top:787px;width:300px">6,120</div>
<div class="t r " style="left:63.31px;top:787px;width:300px">9,180</div>
<div class="t r " style="left:147.61px;top:787px;width:300px">11,934</div>
<div class="t r " style="left:250.71px;top:787px;width:300px">14,321</div>
<div class="t r " style="left:354.01px;top:787px;width:300px">15,753</div>
<div class="t r " style="left:457.71px;top:787px;width:300px">510</div>
<div class="t r " style="left:542.71px;top:787px;width:300px">510</div>
<div class="t r " style="left:627.71px;top:787px;width:300px">510</div>
<div class="t r " style="left:712.71px;top:787px;width:300px">510</div>
<div class="t r " style="left:797.71px;top:787px;width:300px">510</div>
<div class="t r " style="left:882.71px;top:787px;width:300px">510</div>
<div class="t r " style="left:967.71px;top:787px;width:300px">510</div>
<div class="t r " style="left:1052.71px;top:787px;width:300px">510</div>
<div class="t r " style="left:1137.71px;top:787px;width:300px">510</div>
<div class="t r " style="left:1222.71px;top:787px;width:300px">510</div>
<div class="t r " style="left:1307.71px;top:787px;width:300px">510</div>
<div class="t r " style="left:1392.71px;top:787px;width:300px">510</div>
<div class="t r " style="left:1486.51px;top:787px;width:300px">765</div>
<div class="t r " style="left:-118.20px;top:807px;width:300px">Payroll Tax</div>
<div class="t r " style="left:-17.29px;top:807px;width:300px">12,240</div>
<div class="t r " style="left:63.31px;top:807px;width:300px">18,360</div>
<div class="t r " style="left:147.61px;top:807px;width:300px">23,868</div>
<div class="t r " style="left:250.71px;top:807px;width:300px">28,642</div>
<div class="t r " style="left:354.01px;top:807px;width:300px">31,506</div>
<div class="t r " style="left:457.71px;top:807px;width:300px">1,020</div>
<div class="t r " style="left:542.71px;top:807px;width:300px">1,020</div>
<div class="t r " style="left:627.71px;top:807px;width:300px">1,020</div>
<div class="t r " style="left:712.71px;top:807px;width:300px">1,020</div>
<div class="t r " style="left:797.71px;top:807px;width:300px">1,020</div>
<div class="t r " style="left:882.71px;top:807px;width:300px">1,020</div>
<div class="t r " style="left:967.71px;top:807px;width:300px">1,020</div>
<div class="t r " style="left:1052.71px;top:807px;width:300px">1,020</div>
<div class="t r " style="left:1137.71px;top:807px;width:300px">1,020</div>
<div class="t r " style="left:1222.71px;top:807px;width:300px">1,020</div>
<div class="t r " style="left:1307.71px;top:807px;width:300px">1,020</div>
<div class="t r " style="left:1392.71px;top:807px;width:300px">1,020</div>
<div class="t r " style="left:1486.51px;top:807px;width:300px">1,530</div>
<div class="a" style="left:0px;top:0px;width:1798px;height:1px;background:#a6a6a6;"></div>
<div class="a" style="left:189px;top:0px;width:1px;height:827px;background:#a0a0a0;"></div>
<div class="a" style="left:0px;top:146px;width:1798px;height:1px;background:#a0a0a0;"></div>
<div class="a" style="left:190px;top:766px;width:1608px;height:1px;background:#000;"></div>
<div class="a" style="left:666px;top:0px;width:5px;height:827px;background:#aca8a7;"></div>
<div class="a" style="left:666px;top:766px;width:5px;height:1px;background:#3a3a3a;"></div>
<div class="a" style="left:0px;top:827px;width:1798px;height:1px;background:#a6a6a6;"></div>
<div class="a" style="left:0px;top:828px;width:1798px;height:26px;background:#f5f5f5;"></div>
<svg class="a" style="left:19.5px;top:836.5px" width="7" height="11"><polygon points="0.5,0.5 6,5 0.5,9.5" fill="#16602f"/></svg>
<div class="a" style="left:45px;top:842px;width:2px;height:2px;background:#0f5a2a;"></div>
<div class="a" style="left:50px;top:842px;width:2px;height:2px;background:#0f5a2a;"></div>
<div class="a" style="left:55px;top:842px;width:2px;height:2px;background:#0f5a2a;"></div>
<div class="a" style="left:66px;top:831px;width:1px;height:21px;background:#a0a0a0;"></div>
<div class="a" style="left:69px;top:830px;width:256px;height:23px;background:#2e74b5;"></div>
<div class="a" style="left:85.3px;top:827px;height:24px;line-height:24px;font-size:16px;color:#fff;white-space:pre;letter-spacing:0.608px">Startup Investment Summary</div>
<div class="a" style="left:330px;top:830px;width:106px;height:23px;background:#2e74b5;"></div>
<div class="a" style="left:341.7px;top:827px;height:24px;line-height:24px;font-size:16px;color:#fff;white-space:pre;letter-spacing:0.380px">Dashboard</div>
<div class="a" style="left:441px;top:830px;width:183px;height:23px;background:#2e74b5;"></div>
<div class="a" style="left:453.5px;top:827px;height:24px;line-height:24px;font-size:16px;color:#fff;white-space:pre;letter-spacing:0.190px">Revenue Forecasting</div>
<div class="a" style="left:629px;top:830px;width:171px;height:23px;background:#ffc000;"></div>
<div class="a" style="left:641.7px;top:827px;height:24px;line-height:24px;font-size:16px;color:#000;white-space:pre;letter-spacing:0.629px">Income Statement</div>
<div class="a" style="left:805px;top:830px;width:188px;height:23px;background:#ffc000;"></div>
<div class="a" style="left:818.9px;top:827px;height:24px;line-height:24px;font-size:16px;color:#000;white-space:pre;letter-spacing:0.292px">Cash Flow Statement</div>
<div class="a" style="left:998px;top:830px;width:130px;height:23px;background:#ffc000;"></div>
<div class="a" style="left:1010.0px;top:827px;height:24px;line-height:24px;font-size:16px;color:#000;white-space:pre;letter-spacing:0.117px">Balance Sheet</div>
<div class="a" style="left:327px;top:831px;width:1px;height:21px;background:#c8c8c8;"></div>
<div class="a" style="left:438px;top:831px;width:1px;height:21px;background:#c8c8c8;"></div>
<div class="a" style="left:626px;top:831px;width:1px;height:21px;background:#c8c8c8;"></div>
<div class="a" style="left:803px;top:831px;width:1px;height:21px;background:#c8c8c8;"></div>
<div class="a" style="left:995px;top:831px;width:1px;height:21px;background:#c8c8c8;"></div>
<div class="a" style="left:1130px;top:827px;width:80px;height:26px;background:#fff;"></div>
<div class="a" style="left:1130px;top:827px;width:1px;height:26px;background:#a6a6a6;"></div>
<div class="a" style="left:1209px;top:827px;width:1px;height:26px;background:#a6a6a6;"></div>
<div class="a" style="left:1130px;top:851px;width:80px;height:2px;background:#1e6e3c;"></div>
<div class="a b" style="left:1142.7px;top:827px;height:24px;line-height:24px;font-size:16px;color:#1e6e3c;white-space:pre">Payroll</div>
<div class="a" style="left:1222px;top:827px;height:24px;line-height:24px;font-size:16px;color:#505050;white-space:pre">KPI's</div>
<div class="a" style="left:1271px;top:842px;width:2px;height:2px;background:#0f5a2a;"></div>
<div class="a" style="left:1276px;top:842px;width:2px;height:2px;background:#0f5a2a;"></div>
<div class="a" style="left:1281px;top:842px;width:2px;height:2px;background:#0f5a2a;"></div>
<svg class="a" style="left:1295px;top:831px" width="22" height="21"><circle cx="11" cy="10.8" r="9.4" fill="none" stroke="#5e5e5e" stroke-width="1.5"/><path d="M11 6v10M6 11h10" stroke="#5e5e5e" stroke-width="2"/></svg>
<div class="a" style="left:1334px;top:837px;width:2px;height:2px;background:#b0b0b0;"></div>
<div class="a" style="left:1334px;top:841px;width:2px;height:2px;background:#b0b0b0;"></div>
<div class="a" style="left:1334px;top:845px;width:2px;height:2px;background:#b0b0b0;"></div>
<div class="a" style="left:1485px;top:831px;width:313px;height:20px;background:#e6e6e6;"></div>
<div class="a" style="left:1352px;top:832px;width:133px;height:19px;border:1px solid #a0a0a0;background:#fff"></div>
<div class="a" style="left:1370px;top:832px;width:2px;height:19px;background:#989898;"></div>
<svg class="a" style="left:1355px;top:836px" width="10" height="11"><polygon points="8,1 8,10 2.5,5.5" fill="#6a6a6a"/></svg>
</body></html>
